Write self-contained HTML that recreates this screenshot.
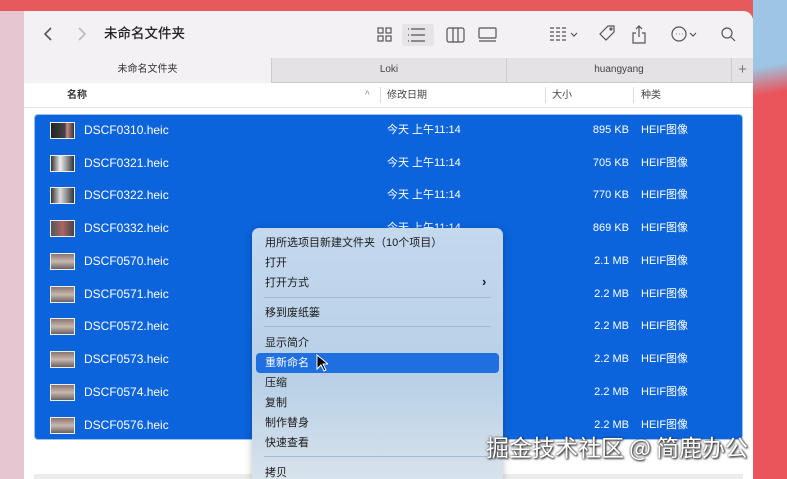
<!DOCTYPE html>
<html><head><meta charset="utf-8"><style>
*{margin:0;padding:0;box-sizing:border-box}
html,body{width:787px;height:479px;overflow:hidden}
body{position:relative;font-family:"Liberation Sans","Noto Sans CJK SC",sans-serif;background:#e65a5c}
.left{position:absolute;left:0;top:11px;width:24px;height:468px;background:#e6c6d0}
.right{position:absolute;left:753px;top:0;width:34px;height:479px;background:linear-gradient(170deg,#9cc6e4 0%,#9cc6e4 14%,#e9555a 20%,#e9555a 100%)}
.win{position:absolute;left:24px;top:11px;width:729px;height:468px;background:#fff;border-top-right-radius:10px;overflow:hidden}
.tb{height:47px;background:#f3f1f3;position:relative}
.t{position:absolute;font-size:13.5px;color:#222}
.tabs{position:absolute;top:47px;left:0;width:729px;height:25px;background:#f3f1f3}
.tab{position:absolute;top:0;height:25px;font-size:10px;color:#444;text-align:center;line-height:24px}
.hdr{position:absolute;top:72px;left:0;width:729px;height:25px;border-bottom:1px solid #e4e4e4;font-size:10px;color:#444}
.hdr span{line-height:14px}
.sel{position:absolute;left:10px;top:103px;width:709px;height:326px;background:#0b64dc;border:1px solid #9cc0f0;border-radius:4px}
.row{position:absolute;left:0;width:729px;height:33px;color:#fff;font-size:12px}
.row span{position:absolute;top:9px;line-height:15px;height:15px;font-size:11px}
.row span.n{font-size:12px}
.th{position:absolute;left:26px;top:8px;width:25px;height:17px;background:linear-gradient(#8a7470,#c8b8b0 50%,#6a6060);border:1.5px solid #eee}
.menu{position:absolute;left:252px;top:228px;width:251px;height:251px;background:linear-gradient(#c4d8ee,#b8d0e6 60%,#d8e2ec);border-radius:7px 7px 0 0;box-shadow:0 2px 8px rgba(0,0,0,.25);font-size:11px;color:#1a1a1a}
.mi{position:absolute;left:13px;line-height:15px}
.sep{position:absolute;left:12px;width:227px;height:1px;background:#a8bcd0}
.wm{position:absolute;left:486px;top:431px;font-size:23px;line-height:30px;color:#fff;text-shadow:0 0 2px #333,1px 1px 2px #000;font-family:"Noto Sans CJK SC",sans-serif}
</style></head><body>
<div class="left"></div><div class="right"></div>
<div class="win">
 <div class="tb">
  <svg style="position:absolute;left:20px;top:15px" width="60" height="16"><path d="M7 2 1 8 7 14" fill="none" stroke="#555" stroke-width="1.6"/><path d="M35 2 41 8 35 14" fill="none" stroke="#bbb" stroke-width="1.6"/></svg>
  <div class="t" style="left:80px;top:14px;line-height:18px;font-weight:500">未命名文件夹</div>
  <svg style="position:absolute;left:350px;top:13px" width="380" height="22" fill="none" stroke="#555" stroke-width="1.2">
   <rect x="4" y="4" width="5" height="5"/><rect x="12" y="4" width="5" height="5"/><rect x="4" y="12" width="5" height="5"/><rect x="12" y="12" width="5" height="5"/>
   <rect x="28" y="-1" width="32" height="24" rx="4" fill="#e6e4e6" stroke="none"/>
   <path d="M37 5h14M37 11h14M37 17h14M34 5h1M34 11h1M34 17h1"/>
   <rect x="73" y="4" width="17" height="14" rx="2"/><path d="M79 4v14M84 4v14"/>
   <rect x="105" y="4" width="17" height="10" rx="1"/><path d="M105 17h17"/>
   <path d="M176 4h16M176 8h16M176 12h16M176 16h16" stroke-dasharray="4 2"/><path d="M197 9l3 3 3-3"/>
   <path d="M226 10l8-8h6v6l-8 8z"/><circle cx="237" cy="5" r="1"/>
   <path d="M262 9h-3v10h12V9h-3M265 2v11M262 5l3-3 3 3"/>
   <circle cx="305" cy="10" r="7"/><path d="M302 10h.5M305 10h.5M308 10h.5"/><path d="M316 9l3 3 3-3"/>
   <circle cx="353" cy="9" r="5"/><path d="M357 13l4 4"/>
  </svg>
 </div>
 <div class="tabs">
  <div class="tab" style="left:0;width:247px;background:#f3f1f3;color:#333">未命名文件夹</div>
  <div class="tab" style="left:247px;width:235px;background:#e4e2e4;border-left:1px solid #ccc;border-bottom:1px solid #ccc">Loki</div>
  <div class="tab" style="left:482px;width:225px;background:#e4e2e4;border-left:1px solid #ccc;border-bottom:1px solid #ccc">huangyang</div>
  <div class="tab" style="left:707px;width:22px;background:#e4e2e4;border-left:1px solid #ccc;border-bottom:1px solid #ccc;font-size:15px;color:#777">+</div>
 </div>
 <div class="hdr">
  <span style="position:absolute;left:43px;top:6px;font-weight:bold;color:#333">名称</span>
  <span style="position:absolute;left:341px;top:6px;color:#888">^</span>
  <span style="position:absolute;left:356px;top:4px;width:1px;height:16px;background:#ddd"></span>
  <span style="position:absolute;left:363px;top:6px">修改日期</span>
  <span style="position:absolute;left:521px;top:4px;width:1px;height:16px;background:#ddd"></span>
  <span style="position:absolute;left:528px;top:6px">大小</span>
  <span style="position:absolute;left:609px;top:4px;width:1px;height:16px;background:#ddd"></span>
  <span style="position:absolute;left:617px;top:6px">种类</span>
 </div>
 <div class="sel"></div>
 <div class="row" style="top:103px"><div class="th" style="background:linear-gradient(90deg,#222,#444 60%,#c88 70%,#333)"></div><span class="n" style="left:60px">DSCF0310.heic</span><span style="left:363px">今天 上午11:14</span><span style="right:124px">895 KB</span><span style="left:617px">HEIF图像</span></div>
 <div class="row" style="top:136px"><div class="th" style="background:linear-gradient(90deg,#333,#eee 40%,#333)"></div><span class="n" style="left:60px">DSCF0321.heic</span><span style="left:363px">今天 上午11:14</span><span style="right:124px">705 KB</span><span style="left:617px">HEIF图像</span></div>
 <div class="row" style="top:168px"><div class="th" style="background:linear-gradient(90deg,#333,#ddd 40%,#333)"></div><span class="n" style="left:60px">DSCF0322.heic</span><span style="left:363px">今天 上午11:14</span><span style="right:124px">770 KB</span><span style="left:617px">HEIF图像</span></div>
 <div class="row" style="top:201px"><div class="th" style="background:linear-gradient(90deg,#555,#a66 50%,#444)"></div><span class="n" style="left:60px">DSCF0332.heic</span><span style="left:363px">今天 上午11:14</span><span style="right:124px">869 KB</span><span style="left:617px">HEIF图像</span></div>
 <div class="row" style="top:234px"><div class="th"></div><span class="n" style="left:60px">DSCF0570.heic</span><span style="right:124px">2.1 MB</span><span style="left:617px">HEIF图像</span></div>
 <div class="row" style="top:267px"><div class="th"></div><span class="n" style="left:60px">DSCF0571.heic</span><span style="right:124px">2.2 MB</span><span style="left:617px">HEIF图像</span></div>
 <div class="row" style="top:299px"><div class="th"></div><span class="n" style="left:60px">DSCF0572.heic</span><span style="right:124px">2.2 MB</span><span style="left:617px">HEIF图像</span></div>
 <div class="row" style="top:332px"><div class="th"></div><span class="n" style="left:60px">DSCF0573.heic</span><span style="right:124px">2.2 MB</span><span style="left:617px">HEIF图像</span></div>
 <div class="row" style="top:365px"><div class="th"></div><span class="n" style="left:60px">DSCF0574.heic</span><span style="right:124px">2.2 MB</span><span style="left:617px">HEIF图像</span></div>
 <div class="row" style="top:398px"><div class="th"></div><span class="n" style="left:60px">DSCF0576.heic</span><span style="right:124px">2.2 MB</span><span style="left:617px">HEIF图像</span></div>
 <div style="position:absolute;left:10px;top:463px;width:709px;height:8px;background:#ececec"></div>
</div>
<div class="menu">
 <div class="mi" style="top:8px">用所选项目新建文件夹（10个项目）</div>
 <div class="mi" style="top:28px">打开</div>
 <div class="mi" style="top:48px">打开方式</div>
 <div style="position:absolute;left:230px;top:46px;font-size:13px;font-weight:bold;line-height:15px">›</div>
 <div class="sep" style="top:69px"></div>
 <div class="mi" style="top:78px">移到废纸篓</div>
 <div class="sep" style="top:98px"></div>
 <div class="mi" style="top:108px">显示简介</div>
 <div style="position:absolute;left:4px;top:125px;width:243px;height:20px;background:#1f6fe0;border-radius:4px"></div>
 <div class="mi" style="top:128px;color:#fff">重新命名</div>
 <svg style="position:absolute;left:64px;top:126px" width="12" height="18"><path d="M1 1v14l4-4 3 6 2-1-3-6h5z" fill="#000" stroke="#fff" stroke-width="1"/></svg>
 <div class="mi" style="top:148px">压缩</div>
 <div class="mi" style="top:168px">复制</div>
 <div class="mi" style="top:188px">制作替身</div>
 <div class="mi" style="top:208px">快速查看</div>
 <div class="sep" style="top:228px"></div>
 <div class="mi" style="top:238px">拷贝</div>
</div>
<div class="wm">掘金技术社区 @ 简鹿办公</div>
</body></html>
